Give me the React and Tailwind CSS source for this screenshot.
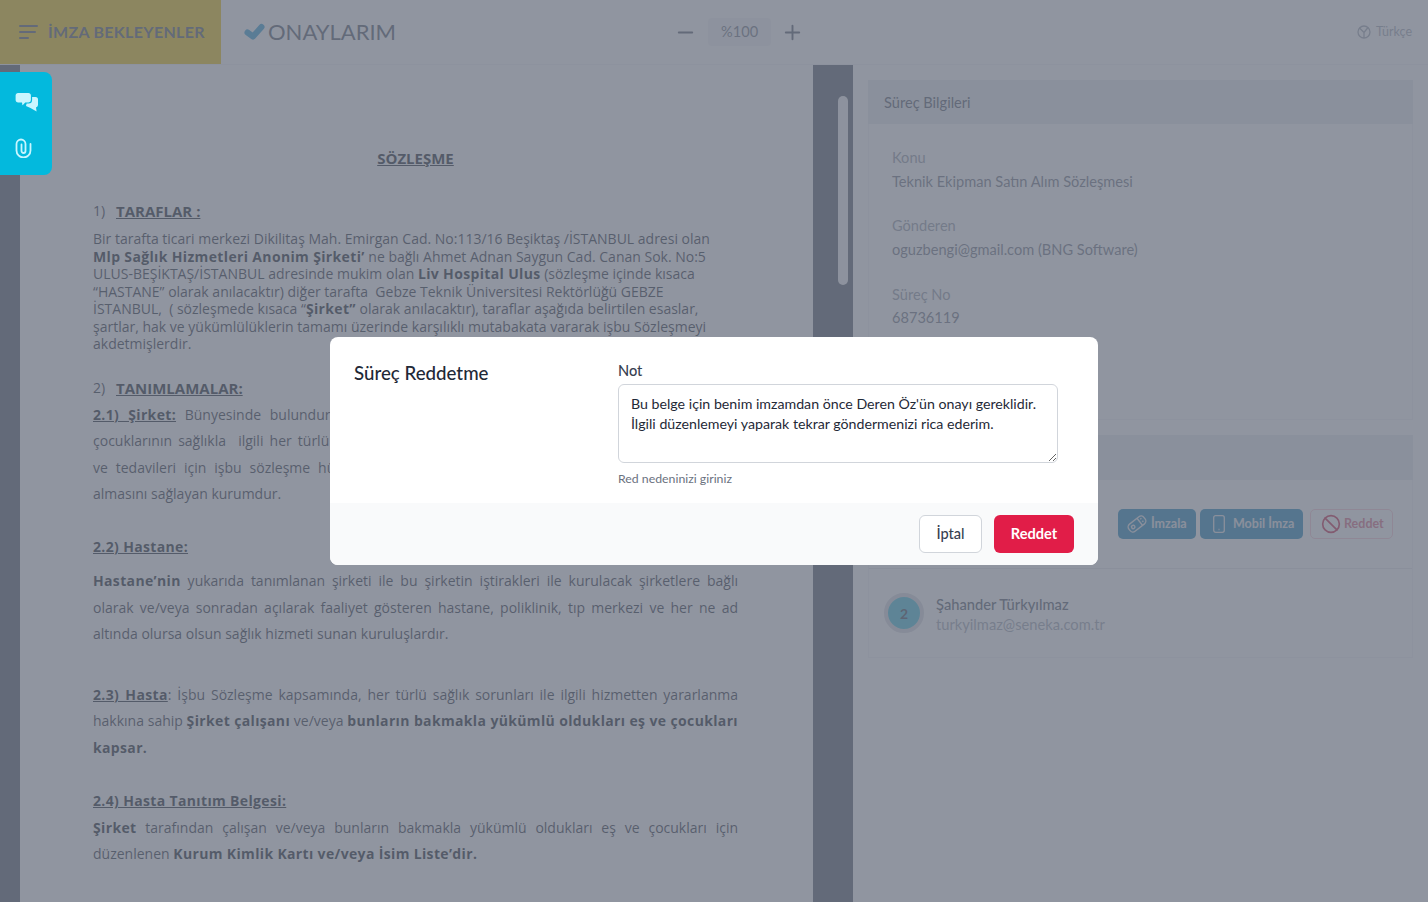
import React from "react";
import { Minus, Plus, Ban } from "lucide-react";

function Justified({ children }) {
  return <p className="text-justify [text-align-last:justify] leading-[26.5px]">{children}</p>;
}

function B({ children }) {
  return <b className="tracking-[0.35px] text-[#111827]">{children}</b>;
}

function U({ children }) {
  return <b className="tracking-[0.35px] text-[#111827] underline">{children}</b>;
}

function Info({ label, value, className, gap = "mt-[4px]" }) {
  return (
    <div className={className}>
      <div className="text-[14.6px] leading-[20px] text-[#8f96a3]">{label}</div>
      <div className={`${gap} text-[14.6px] leading-[20px] text-[#6b7280]`}>{value}</div>
    </div>
  );
}

export default function App() {
  return (
    <div className="relative flex h-[902px] w-full flex-col overflow-hidden bg-white font-['Lato',sans-serif]">
      <header className="flex h-[65px] shrink-0 items-center border-b border-[#f3f4f6] bg-white">
        <div className="flex h-full w-[221px] items-center bg-[#f0c400] pl-[18px]">
          <svg width="20" height="16" viewBox="0 0 20 16" fill="none" stroke="#4b5563" strokeWidth="2" strokeLinecap="round">
            <path d="M2 2h17M2 8h15M2 14h8" />
          </svg>
          <span className="ml-[10px] text-[16px] font-bold tracking-[0.3px] text-[#4b5563]">İMZA BEKLEYENLER</span>
        </div>
        <div className="ml-[23px] flex items-center">
          <svg width="21" height="18" viewBox="0 0 21 18" fill="none" stroke="#2b9ad2" strokeWidth="6" strokeLinecap="round" strokeLinejoin="round">
            <path d="M3.500 9.500L9 13.500L17.500 4" />
          </svg>
          <span className="ml-[3px] text-[22px] font-normal leading-[30px] text-[#4b5563]">ONAYLARIM</span>
        </div>
        <div className="ml-[278px] flex items-center">
          <Minus size={23} strokeWidth={2} className="text-[#4b5563]" />
          <div className="ml-[11px] flex h-[28px] w-[63px] items-center justify-center rounded bg-[#f3f4f6] text-[14.6px] text-[#6b7280]">%100</div>
          <Plus size={23} strokeWidth={2} className="ml-[10px] text-[#4b5563]" />
        </div>
        <div className="ml-auto mr-[16px] flex items-center gap-[5px] text-[12.5px] text-[#9ca3af]">
          <svg width="14" height="14" viewBox="0 0 14 14" fill="none" stroke="#9ca3af" strokeWidth="1.300">
            <circle cx="7" cy="7" r="6" />
            <path d="M2.500 3l4.500 4.500L11 2.500M7 7.500V13" />
          </svg>
          Türkçe
        </div>
      </header>

      <main className="flex min-h-0 flex-1">
        <div className="w-[20px] shrink-0 bg-[#4b5563]" />
        <article className="w-[793px] shrink-0 overflow-hidden bg-white pl-[73px] pr-[75px] pt-[83px] font-['Open_Sans',sans-serif] text-[14px] text-[#1f2937]">
          <h1 className="text-center text-[15px] font-bold leading-[20px] text-[#111827] underline">SÖZLEŞME</h1>
          <h2 className="mt-[33px] flex text-[14px] leading-[20px]">
            <span className="w-[23px]">1)</span>
            <b className="text-[15px] text-[#111827] underline">TARAFLAR :</b>
          </h2>
          <div className="mt-[9px] whitespace-nowrap leading-[17.5px]">
            <div>Bir tarafta ticari merkezi Dikilitaş Mah. Emirgan Cad. No:113/16 Beşiktaş /İSTANBUL adresi olan</div>
            <div><B>Mlp Sağlık Hizmetleri Anonim Şirketi’</B> ne bağlı Ahmet Adnan Saygun Cad. Canan Sok. No:5</div>
            <div>ULUS-BEŞİKTAŞ/İSTANBUL adresinde mukim olan <B>Liv Hospital Ulus</B> (sözleşme içinde kısaca</div>
            <div>“HASTANE” olarak anılacaktır) diğer tarafta&nbsp; Gebze Teknik Üniversitesi Rektörlüğü GEBZE</div>
            <div>İSTANBUL,&nbsp; ( sözleşmede kısaca “<B>Şirket”</B> olarak anılacaktır), taraflar aşağıda belirtilen esaslar,</div>
            <div>şartlar, hak ve yükümlülüklerin tamamı üzerinde karşılıklı mutabakata vararak işbu Sözleşmeyi</div>
            <div>akdetmişlerdir.</div>
          </div>
          <h2 className="mt-[25px] flex text-[14px] leading-[20px]">
            <span className="w-[23px]">2)</span>
            <b className="text-[15px] text-[#111827] underline">TANIMLAMALAR:</b>
          </h2>
          <div className="mt-[4px]">
            <Justified><U>2.1) Şirket:</U> Bünyesinde bulundurduğu hastane ve tıp merkezlerinde çalışanları ile bunların</Justified>
            <Justified>çocuklarının sağlıkla&nbsp; ilgili her türlü sorunlarında hizmet almalarını isteyen ve bu kişilerin teşhis</Justified>
            <Justified>ve tedavileri için işbu sözleşme hükümleri çerçevesinde Hastane’ye başvurarak sağlık hizmeti</Justified>
            <p className="leading-[26.5px]">almasını sağlayan kurumdur.</p>
          </div>
          <h3 className="mt-[26px] leading-[26.5px]"><U>2.2) Hastane:</U></h3>
          <div className="mt-[8px]">
            <Justified><B>Hastane’nin</B> yukarıda tanımlanan şirketi ile bu şirketin iştirakleri ile kurulacak şirketlere bağlı</Justified>
            <Justified>olarak ve/veya sonradan açılarak faaliyet gösteren hastane, poliklinik, tıp merkezi ve her ne ad</Justified>
            <p className="leading-[26.5px]">altında olursa olsun sağlık hizmeti sunan kuruluşlardır.</p>
          </div>
          <div className="mt-[34px]">
            <Justified><U>2.3) Hasta</U>: İşbu Sözleşme kapsamında, her türlü sağlık sorunları ile ilgili hizmetten yararlanma</Justified>
            <Justified>hakkına sahip <B>Şirket çalışanı</B> ve/veya <B>bunların bakmakla yükümlü oldukları eş ve çocukları</B></Justified>
            <p className="leading-[26.5px]"><B>kapsar.</B></p>
          </div>
          <h3 className="mt-[27px] leading-[26.5px]"><U>2.4) Hasta Tanıtım Belgesi:</U></h3>
          <div>
            <Justified><B>Şirket</B> tarafından çalışan ve/veya bunların bakmakla yükümlü oldukları eş ve çocukları için</Justified>
            <p className="leading-[26.5px]">düzenlenen <B>Kurum Kimlik Kartı ve/veya İsim Liste’dir.</B></p>
          </div>
        </article>

        <div className="flex w-[40px] shrink-0 justify-end bg-[#4b5563] pr-[5px] pt-[31px]">
          <div className="h-[189px] w-[10px] rounded-full bg-[#f3f4f6]" />
        </div>

        <aside className="min-w-0 flex-1 bg-white px-[15px] pt-[15px]">
          <section className="h-[340px]">
            <div className="flex h-[44px] items-center bg-[#e8eaed] pt-[2px] pl-[16px] text-[14.6px] text-[#4b5563]">Süreç Bilgileri</div>
            <div className="h-[296px] border border-t-0 border-[#f3f4f6] pl-[23px] pt-[24px]">
              <Info label="Konu" value="Teknik Ekipman Satın Alım Sözleşmesi" />
              <Info label="Gönderen" value="oguzbengi@gmail.com (BNG Software)" className="mt-[24px]" />
              <Info label="Süreç No" value="68736119" className="mt-[25px]" gap="mt-[3px]" />
            </div>
          </section>
          <section className="mt-[15px] border border-t-0 border-[#f3f4f6]">
            <div className="-mx-px flex h-[45px] items-center bg-[#e8eaed] pl-[16px] text-[14.6px] text-[#4b5563]">İmzalayanlar</div>
            <div className="flex h-[89px] items-center justify-end gap-[4px] border-b border-[#e5e7eb] pr-[19px]">
              <button className="flex h-[30px] w-[78px] items-center gap-[4px] rounded-[5px] bg-[#1481b8] pl-[9px] text-[12.5px] font-bold text-[#e5e7eb]">
                <svg width="20" height="20" viewBox="0 0 20 20" fill="none" stroke="currentColor" strokeWidth="1.400">
                  <g transform="rotate(-38 10 10)">
                    <rect x="0.500" y="5.500" width="19" height="9" rx="3.500" />
                    <circle cx="5.200" cy="10" r="1.700" />
                    <path d="M13.500 5.500v9M15.500 8.200h1.500M15.500 11.500h1.500" />
                  </g>
                </svg>
                İmzala
              </button>
              <button className="flex h-[30px] w-[103px] items-center gap-[8px] rounded-[5px] bg-[#1481b8] pl-[13px] text-[12.5px] font-bold text-[#e5e7eb]">
                <svg width="12" height="18" viewBox="0 0 12 18" fill="none" stroke="currentColor" strokeWidth="1.300">
                  <rect x="0.700" y="0.700" width="10.600" height="16.600" rx="2" />
                  <path d="M5.500 14.500h1" />
                </svg>
                Mobil İmza
              </button>
              <button className="ml-[3px] flex h-[30px] w-[83px] items-center gap-[3px] rounded-[5px] border border-[#f9c7d3] bg-white pl-[10px] text-[12.5px] font-bold text-[#d9657f]">
                <Ban size={20} strokeWidth={2} className="text-[#c81e45]" />
                Reddet
              </button>
            </div>
            <div className="flex h-[88px] items-center pl-[15px]">
              <div className="flex h-[40px] w-[40px] items-center justify-center rounded-full border-[4px] border-[#d5d8dd] bg-[#38bdd8] text-[14px] font-bold text-[#374151]">2</div>
              <div className="ml-[12px] pt-[2px] text-[14.7px] leading-[20px]">
                <div className="font-medium text-[#4b5563]">Şahander Türkyılmaz</div>
                <div className="text-[#9ca3af]">turkyilmaz@seneka.com.tr</div>
              </div>
            </div>
          </section>
        </aside>
      </main>

      <div className="absolute inset-0 z-10 bg-[#6b7280]/75" />

      <div className="absolute left-0 top-[72px] z-20 flex h-[103px] w-[52px] flex-col items-start rounded-r-lg bg-[#03b9dd] pl-[15px] pt-[20px]">
        <svg width="23" height="20" viewBox="0 0 23 20">
          <path d="M13 5h7.500A2.500 2.500 0 0 1 23 7.500V13a2.500 2.500 0 0 1-2 2.400l.6 4.100L15.500 16 11 14z" fill="#c9f6ff" />
          <path d="M3 .5h10.500a3 3 0 0 1 3 3V8a3 3 0 0 1-3 3H10.500L7 14.800 6.500 11H3a3 3 0 0 1-3-3V3.500a3 3 0 0 1 3-3z" fill="#c9f6ff" stroke="#03b9dd" strokeWidth="1.200" />
        </svg>
        <svg width="17" height="20" viewBox="0 0 17 20" fill="none" stroke="#c9f6ff" strokeWidth="1.800" strokeLinecap="round" className="mt-[26px]">
          <path d="M15.500 6v6.500a7 7 0 0 1-14 0V6a4.500 4.500 0 0 1 9 0v7a2 2 0 0 1-4 0V6.500" />
        </svg>
      </div>

      <div className="absolute left-[330px] top-[337px] z-20 flex h-[228px] w-[768px] flex-col overflow-hidden rounded-lg bg-white">
        <div className="flex h-[166px] pl-[24px] pt-[24px]">
          <h2 className="w-[264px] text-[18.7px] font-medium leading-[24px] text-[#1f2937]">Süreç Reddetme</h2>
          <div className="w-[440px]">
            <label className="block text-[14.6px] font-medium leading-[20px] text-[#374151]">Not</label>
            <textarea
              readOnly
              defaultValue={"Bu belge için benim imzamdan önce Deren Öz'ün onayı gereklidir.\nİlgili düzenlemeyi yaparak tekrar göndermenizi rica ederim."}
              className="mt-[3px] block h-[79px] w-[440px] rounded-md border border-[#d1d5db] px-[12px] py-[9px] text-[14.2px] leading-[20px] text-[#1f2937] outline-none"
            />
            <p className="mt-[8px] text-[12.3px] leading-[16px] text-[#6b7280]">Red nedeninizi giriniz</p>
          </div>
        </div>
        <div className="flex flex-1 items-center justify-end gap-[12px] bg-[#f9fafb] pr-[24px]">
          <button className="h-[38px] w-[63px] rounded-md border border-[#d1d5db] bg-white text-[14.6px] font-medium text-[#374151]">İptal</button>
          <button className="h-[38px] w-[80px] rounded-md bg-[#e11d48] text-[14.6px] font-bold text-white">Reddet</button>
        </div>
      </div>
    </div>
  );
}
